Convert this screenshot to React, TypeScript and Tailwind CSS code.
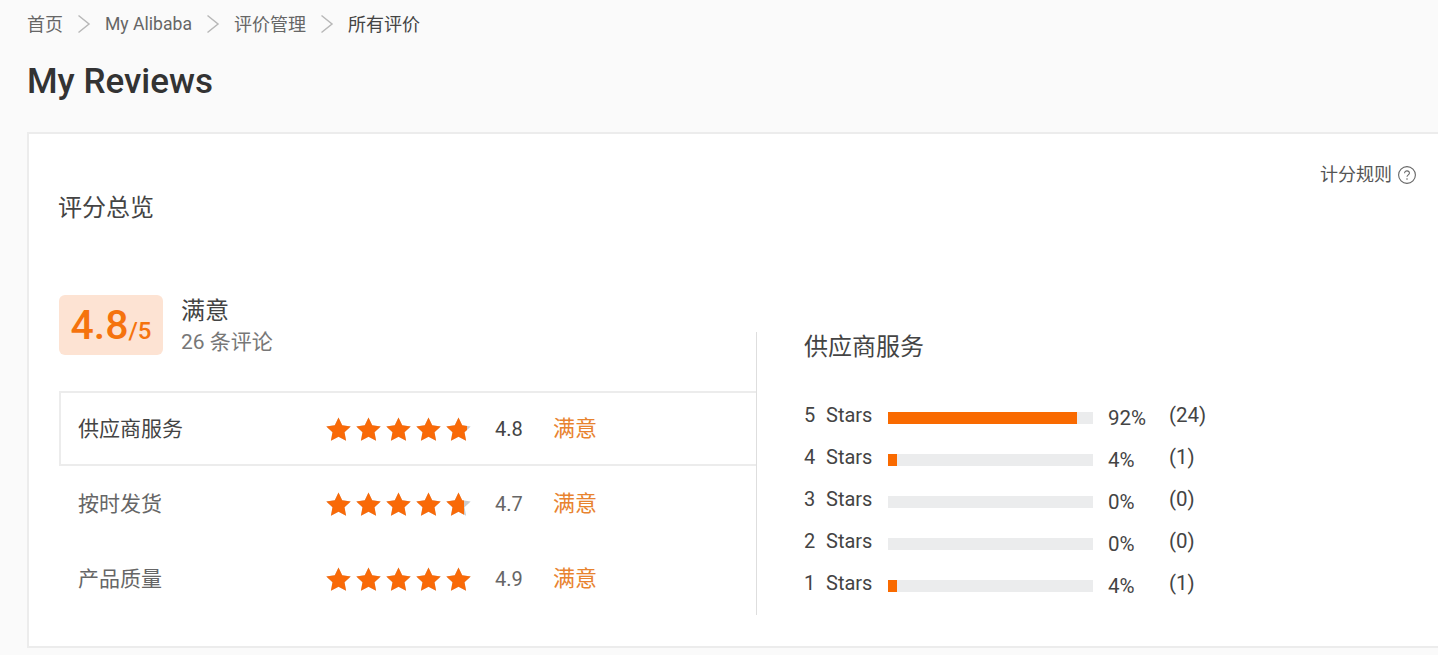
const font = { fontFamily: '"Roboto", "Noto Sans CJK SC", sans-serif' };

const Chevron = () => (
  <svg width="14" height="22" viewBox="0 0 14 22" fill="none" className="mx-[14px]">
    <path d="M1.5 2.5 L12 11 L1.5 19.5" stroke="#b8b8b8" strokeWidth="1.5" />
  </svg>
);

const starPath = "M12.5 0.5 L16.2 8.3 L24.7 9.4 L18.5 15.3 L20.1 23.8 L12.5 19.7 L4.9 23.8 L6.5 15.3 L0.3 9.4 L8.8 8.3 Z";

const Star = ({ fill }: { fill: number }) => (
  <div className="relative w-[25px] h-[24px]">
    <svg width="25" height="24" viewBox="0 0 25 24" className="block">
      <path d={starPath} fill="#c9ccd0" />
    </svg>
    <div className="absolute left-0 top-0 h-[24px] overflow-hidden" style={{ width: `${fill * 100}%` }}>
      <svg width="25" height="24" viewBox="0 0 25 24" className="block">
        <path d={starPath} fill="#f96a08" />
      </svg>
    </div>
  </div>
);

const Stars = ({ last }: { last: number }) => (
  <div className="flex gap-[5px] w-[169px]">
    <Star fill={1} />
    <Star fill={1} />
    <Star fill={1} />
    <Star fill={1} />
    <Star fill={last} />
  </div>
);

const ratings = [
  { label: "供应商服务", value: "4.8", last: 0.82, active: true },
  { label: "按时发货", value: "4.7", last: 0.7, active: false },
  { label: "产品质量", value: "4.9", last: 1, active: false },
];

const dist = [
  { n: 5, w: 92, pct: "92%", count: "(24)" },
  { n: 4, w: 4.4, pct: "4%", count: "(1)" },
  { n: 3, w: 0, pct: "0%", count: "(0)" },
  { n: 2, w: 0, pct: "0%", count: "(0)" },
  { n: 1, w: 4.4, pct: "4%", count: "(1)" },
];

export default function App() {
  return (
    <div className="w-[1438px] h-[655px] overflow-hidden bg-[#fafafa] text-[#333]" style={font}>
      <div className="flex items-center h-[24px] mt-[12px] pl-[27px] text-[18px] text-[#666]">
        <span>首页</span>
        <Chevron />
        <span className="text-[17.6px]">My Alibaba</span>
        <Chevron />
        <span>评价管理</span>
        <Chevron />
        <span className="text-[#444]">所有评价</span>
      </div>
      <h1 className="pl-[27px] mt-[24px] h-[42px] leading-[44px] text-[35px] font-medium text-[#333]">My Reviews</h1>

      <div className="ml-[27px] mt-[30px] h-[516px] bg-white border-y-2 border-l-2 border-[#ececec] pl-[30px]">
        <div className="flex justify-between items-start h-[161px]">
          <div className="mt-[58px] -ml-[1px] text-[24px] leading-[32px] text-[#444]">评分总览</div>
          <div className="flex items-center mt-[29px] mr-[22px] text-[18px] leading-[24px] text-[#555]">
            <span>计分规则</span>
            <svg width="18" height="18" viewBox="0 0 18 18" fill="none" className="ml-[6px]">
              <circle cx="9" cy="9" r="8.4" stroke="#666" strokeWidth="1.1" />
              <path d="M6.6 7.2 C6.6 3.9 11.6 4.2 11.4 7.2 C11.3 8.8 9 8.9 9 10.8" stroke="#666" strokeWidth="1.1" />
              <circle cx="9" cy="13" r="0.8" fill="#666" />
            </svg>
          </div>
        </div>

        <div className="flex items-start">
          <div className="w-[697px]">
            <div className="flex items-center h-[60px]">
              <div className="flex items-baseline justify-center w-[104px] h-[60px] leading-[60px] rounded-[6px] bg-[#fde3d3] text-[#f5730e] font-medium">
                <span className="text-[41px]">4.8</span>
                <span className="text-[24px]">/5</span>
              </div>
              <div className="ml-[18px] mt-[2px]">
                <div className="text-[24px] leading-[30px] text-[#444]">满意</div>
                <div className="text-[21px] leading-[30px] text-[#777] mt-[1px]">26 条评论</div>
              </div>
            </div>
            <div className="mt-[36px]">
              {ratings.map((r) => (
                <div
                  key={r.label}
                  className={
                    r.active
                      ? "flex items-center h-[75px] pl-[17px] border-y-2 border-l-2 border-[#ececec] text-[#444]"
                      : "flex items-center h-[75px] pl-[19px] text-[#666]"
                  }
                >
                  <div className="w-[248px] text-[21px] pt-[3px]">{r.label}</div>
                  <Stars last={r.last} />
                  <div className="w-[58px] text-[20px] pt-[1px]">{r.value}</div>
                  <div className="text-[22px] text-[#e8832f]">满意</div>
                </div>
              ))}
            </div>
          </div>

          <div className="mt-[37px] h-[283px] flex-1 border-l border-[#dedede] pl-[47px]">
            <div className="text-[24px] leading-[30px] text-[#444]">供应商服务</div>
            <div className="mt-[32px]">
              {dist.map((d) => (
                <div key={d.n} className="flex items-center h-[42px] text-[20px] text-[#444]">
                  <span className="w-[22px]">{d.n}</span>
                  <span className="w-[62px]">Stars</span>
                  <div className="w-[205px] h-[12px] mt-[5px] bg-[#ebeced]">
                    <div className="h-full bg-[#f96a00]" style={{ width: `${d.w}%` }} />
                  </div>
                  <span className="w-[61px] ml-[15px] mt-[6px] text-[20.5px]">{d.pct}</span>
                  <span className="text-[20.5px]">{d.count}</span>
                </div>
              ))}
            </div>
          </div>
        </div>
      </div>
    </div>
  );
}
